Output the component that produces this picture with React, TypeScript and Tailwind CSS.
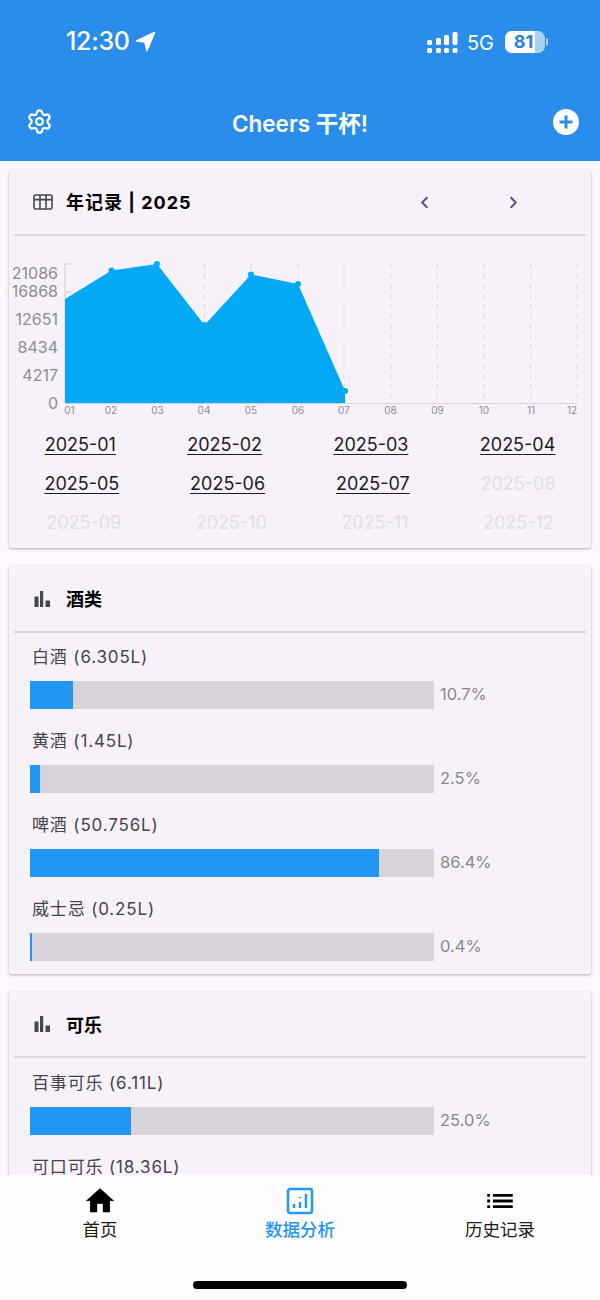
import { ChevronLeft, ChevronRight, Settings } from 'lucide-react';

const font = { fontFamily: 'Inter, "Noto Sans CJK SC", sans-serif' };

const months = [
  ['2025-01', '2025-02', '2025-03', '2025-04'],
  ['2025-05', '2025-06', '2025-07', '2025-08'],
  ['2025-09', '2025-10', '2025-11', '2025-12'],
];
const activeMonths = 7;

const liquor = [
  { name: '白酒 (6.305L)', pct: 10.7 },
  { name: '黄酒 (1.45L)', pct: 2.5 },
  { name: '啤酒 (50.756L)', pct: 86.4 },
  { name: '威士忌 (0.25L)', pct: 0.4 },
];
const cola = [
  { name: '百事可乐 (6.11L)', pct: 25.0 },
  { name: '可口可乐 (18.36L)', pct: 75.0 },
];

const points = [
  [65, 299],
  [111.5, 270.5],
  [157, 264],
  [204.5, 325],
  [251, 274.5],
  [298, 284],
  [345, 391],
];
const gridXs = [204.5, 251, 298, 344, 391, 437.5, 484, 530.5, 577];
const yLabels = [
  ['21086', 279],
  ['16868', 297],
  ['12651', 325],
  ['8434', 353],
  ['4217', 381],
  ['0', 409],
] as const;
const xLabels = [
  ['01', 69.5],
  ['02', 111],
  ['03', 157.5],
  ['04', 204],
  ['05', 251],
  ['06', 298],
  ['07', 344],
  ['08', 390.5],
  ['09', 437.5],
  ['10', 484],
  ['11', 531],
  ['12', 572],
] as const;

function StatusBar() {
  return (
    <div className="flex h-[82px] items-start justify-between pl-[66px] pr-[52px] pt-[26px] text-white">
      <div className="flex items-center gap-[5px]">
        <span className="text-[25px] leading-[30px] font-medium tracking-[-0.3px]">12:30</span>
        <svg width="21" height="21" viewBox="0 0 21 21" fill="white" stroke="white" strokeWidth="1.6" strokeLinejoin="round">
          <path d="M19.5 1.5 L1.5 10 L10 11 L12 19.5 Z" />
        </svg>
      </div>
      <div className="flex items-center gap-[7px] pt-[2px]">
        <svg width="31" height="24" viewBox="0 0 31 24" fill="white">
          <rect x="0" y="10" width="5" height="5" rx="1.5" />
          <rect x="0" y="18" width="5" height="5" rx="1.5" />
          <rect x="9" y="8" width="5" height="7" rx="1.5" />
          <rect x="9" y="18" width="5" height="5" rx="1.5" />
          <rect x="17" y="5" width="5" height="10" rx="1.5" />
          <rect x="17" y="18" width="5" height="5" rx="1.5" />
          <rect x="25.5" y="2" width="5" height="13" rx="1.5" />
          <rect x="25.5" y="18" width="5" height="5" rx="1.5" />
        </svg>
        <span className="ml-[2px] pt-[3px] text-[20px] leading-[24px] font-normal">5G</span>
        <div className="ml-[4px] flex items-center">
          <div className="relative flex h-[22px] w-[40px] items-center justify-center overflow-hidden rounded-[7px] bg-[#a9d0f6]">
            <div className="absolute left-0 top-0 h-full w-[30px] bg-white" />
            <span className="relative pr-[3px] text-[18px] leading-none font-bold text-[#2a80d6]">81</span>
          </div>
          <div className="ml-[1px] h-[8px] w-[2px] rounded-r-sm bg-[#a9d0f6]" />
        </div>
      </div>
    </div>
  );
}

function BarChartIcon() {
  return (
    <svg width="18" height="18" viewBox="0 0 18 18" fill="#49454f" className="ml-[2px]">
      <rect x="0.5" y="6.5" width="4" height="10.5" />
      <rect x="6" y="1" width="3.2" height="16" />
      <rect x="11.5" y="10.5" width="4.5" height="6.5" />
    </svg>
  );
}

function CardHeader({ title, icon, height }: { title: string; icon: React.ReactNode; height: string }) {
  return (
    <div className={`mx-[5px] flex items-center border-b-2 border-[#dcd8de] pl-[18px] ${height}`}>
      <div className="flex w-[34px] items-center">{icon}</div>
      <span className="pt-[2px] text-[18px] font-semibold text-black">{title}</span>
    </div>
  );
}

function UsageRow({ name, pct }: { name: string; pct: number }) {
  return (
    <div className="h-[84px]">
      <div className="pl-[23px] text-[17px] leading-[24px] tracking-[0.85px] text-[#46434b]">{name}</div>
      <div className="mt-[12px] flex items-center pl-[21px]">
        <div className="h-[28px] w-[404px] bg-[#d7d3d9]">
          <div className="h-full bg-[#2196f3]" style={{ width: `${pct}%` }} />
        </div>
        <span className="ml-[6px] -mt-[2px] text-[16.5px] text-[#8a868c]">{pct.toFixed(1)}%</span>
      </div>
    </div>
  );
}

function YearChart() {
  const area = `M65 403 L${points.map(p => p.join(' ')).join(' L')} L345 403 Z`;
  return (
    <svg width="582" height="170" viewBox="9 250 582 170" className="block">
      {gridXs.map(x => (
        <line key={x} x1={x} y1="264" x2={x} y2="403" stroke="#dcd8de" strokeWidth="1" strokeDasharray="5 5" />
      ))}
      <line x1="65" y1="264" x2="65" y2="403" stroke="#d3cfd5" />
      <line x1="65" y1="264" x2="72" y2="264" stroke="#d3cfd5" />
      <line x1="65" y1="292" x2="72" y2="292" stroke="#d3cfd5" />
      <line x1="65" y1="403.5" x2="577" y2="403.5" stroke="#d8d4da" />
      <path d={area} fill="#03a9f4" />
      {points.slice(1).map(([x, y]) => (
        <circle key={x} cx={x} cy={y} r="3" fill="#03a9f4" />
      ))}
      {yLabels.map(([label, y]) => (
        <text key={label} x="58" y={y} textAnchor="end" fontSize="16" fill="#8f8b92">
          {label}
        </text>
      ))}
      {xLabels.map(([label, x]) => (
        <text key={label} x={x} y="414" textAnchor="middle" fontSize="10" fill="#8f8b92">
          {label}
        </text>
      ))}
    </svg>
  );
}

export default function App() {
  return (
    <div className="flex h-[1300px] w-[600px] flex-col overflow-hidden bg-[#fef7ff]" style={font}>
      <header className="h-[161px] shrink-0 bg-[#2a8deb]">
        <StatusBar />
        <div className="grid h-[79px] grid-cols-[1fr_auto_1fr] items-center pl-[26px] pr-[21px] text-white">
          <Settings size={27} strokeWidth={2} />
          <span className="pt-[4px] pr-[5px] text-[22.5px] font-semibold">Cheers 干杯!</span>
          <svg width="26" height="26" viewBox="0 0 26 26" className="justify-self-end">
            <circle cx="13" cy="13" r="13" fill="white" />
            <path d="M13 6.5v13M6.5 13h13" stroke="#2a8deb" strokeWidth="3" />
          </svg>
        </div>
      </header>

      <main className="flex min-h-0 flex-1 flex-col gap-[18px] overflow-hidden px-[9px] pt-[9px]">
        {/* Year record */}
        <section className="h-[378px] shrink-0 rounded-[3px] bg-[#f7f2fa] shadow-[0_1px_3px_rgba(0,0,0,0.3)]">
          <div className="mx-[5px] flex h-[66px] items-center border-b-2 border-[#dcd8de] pl-[19px]">
            <svg width="20" height="16" viewBox="0 0 20 16" fill="none" stroke="#49454f" strokeWidth="1.6" className="mr-[13px]">
              <rect x="1" y="1" width="18" height="14" rx="1.5" />
              <path d="M1 5.6h18M7 1v14M13 1v14" />
            </svg>
            <span className="w-[349px] text-[18px] font-bold tracking-[1px] text-black">年记录 | 2025</span>
            <ChevronLeft size={19} strokeWidth={2.4} className="text-[#5b4a9c]" />
            <ChevronRight size={19} strokeWidth={2.4} className="ml-[70px] text-[#5b4a9c]" />
          </div>
          <div className="mt-[14px]">
            <YearChart />
          </div>
          <div className="mt-[5px]">
            {months.map((row, r) => (
              <div key={r} className="flex h-[39px] items-center justify-around">
                {row.map((month, i) => {
                  const active = r * 4 + i < activeMonths;
                  return (
                    <span
                      key={month}
                      className={`text-[18px] leading-[24px] ${
                        active ? 'text-[#1d1b20] underline underline-offset-[3px]' : 'text-[#e3dfe6]'
                      }`}
                    >
                      {month}
                    </span>
                  );
                })}
              </div>
            ))}
          </div>
        </section>

        {/* Liquor */}
        <section className="h-[408px] shrink-0 rounded-[3px] bg-[#f7f2fa] shadow-[0_1px_3px_rgba(0,0,0,0.3)]">
          <CardHeader title="酒类" icon={<BarChartIcon />} height="h-[67px]" />
          <div className="pt-[12px]">
            {liquor.map(row => (
              <UsageRow key={row.name} {...row} />
            ))}
          </div>
        </section>

        {/* Cola */}
        <section className="h-[300px] shrink-0 rounded-[3px] bg-[#f7f2fa] shadow-[0_1px_3px_rgba(0,0,0,0.3)]">
          <CardHeader title="可乐" icon={<BarChartIcon />} height="h-[66px]" />
          <div className="pt-[13px]">
            {cola.map(row => (
              <UsageRow key={row.name} {...row} />
            ))}
          </div>
        </section>
      </main>

      {/* Bottom navigation */}
      <nav className="relative h-[125px] shrink-0 bg-[#fdfcfd]">
        <div className="grid grid-cols-3 pt-[9px]">
          <div className="flex flex-col items-center">
            <svg width="34" height="34" viewBox="0 0 24 24" fill="black">
              <path d="M10 20v-6h4v6h5v-8h3L12 3 2 12h3v8z" />
            </svg>
            <span className="text-[17.5px] leading-[24px] text-[#1d1b20]">首页</span>
          </div>
          <div className="flex flex-col items-center">
            <svg width="34" height="34" viewBox="0 0 34 34" fill="none">
              <rect x="5" y="5" width="24" height="24" rx="2" stroke="#2196f3" strokeWidth="2.4" />
              <path d="M11 24v-4M17 24v-6M17 14v-1M23 24V10" stroke="#2196f3" strokeWidth="2.4" />
            </svg>
            <span className="text-[17.5px] leading-[24px] font-medium text-[#2196f3]">数据分析</span>
          </div>
          <div className="flex flex-col items-center">
            <svg width="34" height="34" viewBox="0 0 24 24" fill="black">
              <path d="M3 13h2v-2H3v2zm0 4h2v-2H3v2zm0-8h2V7H3v2zm4 4h14v-2H7v2zm0 4h14v-2H7v2zM7 7v2h14V7H7z" />
            </svg>
            <span className="text-[17.5px] leading-[24px] text-[#1d1b20]">历史记录</span>
          </div>
        </div>
        <div className="absolute bottom-[11px] left-[193px] h-[8px] w-[214px] rounded-full bg-black" />
      </nav>
    </div>
  );
}
